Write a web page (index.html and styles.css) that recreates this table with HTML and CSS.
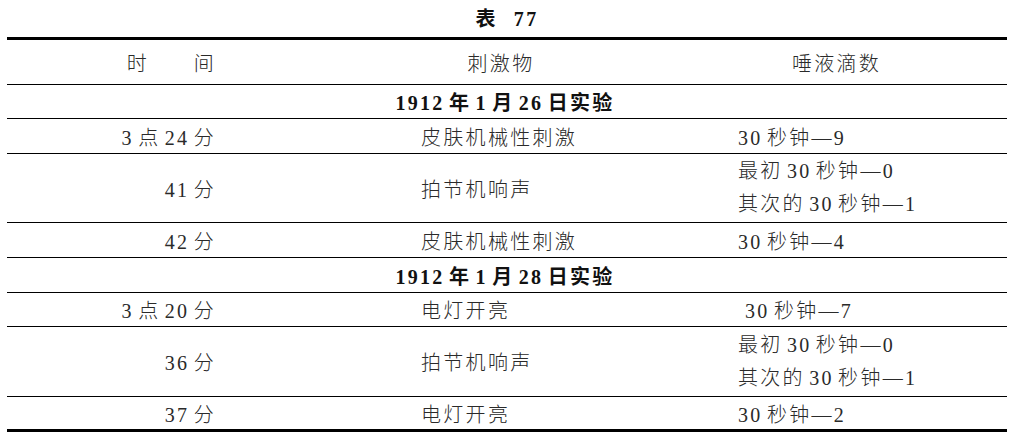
FILE: index.html
```html
<!DOCTYPE html>
<html lang="zh-CN">
<head>
<meta charset="utf-8">
<title>表 77</title>
<link rel="stylesheet" href="styles.css">
</head>
<body>
<div class="page">
  <div class="caption">表<span class="caption-num">77</span></div>
  <div class="table">
    <div class="row head">
      <div class="c1">时　　间</div>
      <div class="c2 center">刺激物</div>
      <div class="c3 center">唾液滴数</div>
    </div>
    <div class="row group g1">1912 年 1 月 26 日实验</div>
    <div class="row r34">
      <div class="c1">3 点 24 分</div>
      <div class="c2">皮肤机械性刺激</div>
      <div class="c3">30 秒钟—9</div>
    </div>
    <div class="row double">
      <div class="c1">41 分</div>
      <div class="c2">拍节机响声</div>
      <div class="c3 lines"><span>最初 30 秒钟—0</span><span>其次的 30 秒钟—1</span></div>
    </div>
    <div class="row r34">
      <div class="c1">42 分</div>
      <div class="c2">皮肤机械性刺激</div>
      <div class="c3">30 秒钟—4</div>
    </div>
    <div class="row group g2">1912 年 1 月 28 日实验</div>
    <div class="row r33">
      <div class="c1">3 点 20 分</div>
      <div class="c2">电灯开亮</div>
      <div class="c3 indent">30 秒钟—7</div>
    </div>
    <div class="row double tall">
      <div class="c1">36 分</div>
      <div class="c2">拍节机响声</div>
      <div class="c3 lines"><span>最初 30 秒钟—0</span><span>其次的 30 秒钟—1</span></div>
    </div>
    <div class="row last">
      <div class="c1">37 分</div>
      <div class="c2">电灯开亮</div>
      <div class="c3">30 秒钟—2</div>
    </div>
  </div>
</div>
</body>
</html>
```
FILE: styles.css
```css
html, body {
  margin: 0;
  padding: 0;
  background: #ffffff;
}

body {
  font-family: "Liberation Serif", "Noto Sans CJK SC", serif;
  font-size: 20px;
  font-weight: 300;
  color: #2a2a2a;
  letter-spacing: 2.3px;
  word-spacing: -3px;
}

.page {
  width: 1000px;
  padding-left: 7px;
}

.caption {
  height: 37px;
  line-height: 38px;
  text-align: center;
  font-weight: 700;
  color: #111;
}

.caption-num {
  margin-left: 16px;
}

.table {
  border-top: 3px solid #000;
  border-bottom: 3px solid #000;
}

.row {
  display: grid;
  grid-template-columns: 293px 402px 305px;
  align-items: center;
  border-bottom: 1px solid #000;
  height: 34px;
  box-sizing: border-box;
}

.row.head { height: 45px; }
.row.g1 { height: 34px; }
.row.r34 { height: 35px; }
.row.g2 { height: 35px; }
.row.r33 { height: 34px; }
.row.double { height: 69px; }
.row.double.tall { height: 70px; }
.row.last { height: 32px; border-bottom: none; }

.c1 {
  text-align: right;
  padding-right: 84px;
  white-space: nowrap;
}

.c2 {
  padding-left: 121px;
  white-space: nowrap;
}

.c3 {
  padding-left: 36px;
  white-space: nowrap;
}

.c2.center {
  padding-left: 0;
  text-align: center;
}

.c3.center {
  padding-left: 0;
  padding-right: 36px;
  text-align: center;
}

.c3.indent {
  padding-left: 43px;
}

.lines {
  display: flex;
  flex-direction: column;
  line-height: 33px;
}

.group {
  display: flex;
  justify-content: center;
  padding-right: 4px;
  font-weight: 700;
  color: #111;
}
```
